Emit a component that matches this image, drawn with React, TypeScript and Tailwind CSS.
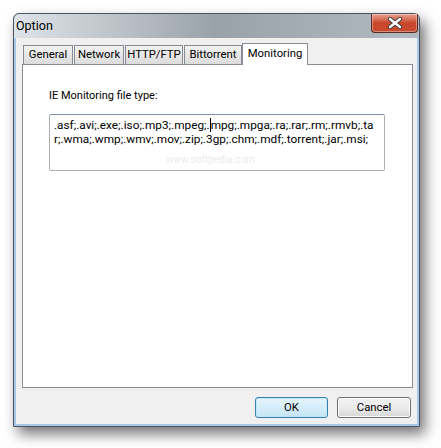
import React from 'react';

const tabs = ['General', 'Network', 'HTTP/FTP', 'Bittorrent'];

const tabWidths: Record<string, string> = {
  General: 'w-[50px]',
  Network: 'w-[50px]',
  'HTTP/FTP': 'w-[58px]',
  Bittorrent: 'w-[58px]',
};

const CloseButton = () => (
  <div className="w-[47px] h-[19px] rounded-b-[4px] border border-t-0 border-[#5a2a22] bg-gradient-to-b from-[#e8a391] via-[#c8462c] to-[#c94a30] flex items-center justify-center shadow-[inset_0_0_0_1px_rgba(255,255,255,0.35)]">
    <svg width="16" height="12" viewBox="0 0 16 12">
      <path d="M3 2 L13 10 M13 2 L3 10" stroke="#3a3a3a" strokeWidth="4.2" strokeLinecap="round" />
      <path d="M3 2 L13 10 M13 2 L3 10" stroke="#ffffff" strokeWidth="2.4" strokeLinecap="round" />
    </svg>
  </div>
);

const App = () => {
  return (
    <div className="w-[441px] h-[448px] bg-white pt-[13px] pl-[13px] font-['Roboto',sans-serif] text-[11.3px] text-black">
      <div className="w-[407px] h-[414px] flex flex-col rounded-t-[6px] border border-[#4b5563] bg-[#b9c0c8] shadow-[5px_7px_14px_rgba(0,0,0,0.55)]">
        {/* title bar */}
        <div className="h-[24px] flex items-start justify-between rounded-t-[6px] bg-gradient-to-r from-[#dfe4e9] via-[#9aa2a9] to-[#b3bac1]">
          <span className="pl-[2px] pt-[5px] leading-[14px] text-[12.5px]">Option</span>
          <div className="pr-[1px]">
            <CloseButton />
          </div>
        </div>
        {/* client area */}
        <div className="flex-1 flex flex-col border-l-2 border-b-2 border-r-2 border-[#a9c8e8] bg-[#f0f0f0]">
          <div className="flex flex-col px-[6px] pt-[5px]">
            <div className="flex items-end h-[21px] pl-[1px]">
              {tabs.map((t) => (
                <div
                  key={t}
                  className={`${tabWidths[t]} h-[19px] mr-[1px] border border-b-0 border-[#898c95] bg-gradient-to-b from-[#f2f2f2] to-[#dcdcdc] flex items-center justify-center leading-none`}
                >
                  {t}
                </div>
              ))}
              <div className="w-[66px] h-[22px] -ml-[1px] -mb-[1px] border border-b-0 border-[#898c95] bg-white flex items-start justify-center pt-[4px] leading-none relative z-10">
                Monitoring
              </div>
            </div>
            <div className="w-[391px] h-[324px] border border-[#898c95] bg-white pl-[26px] pt-[24px]">
              <div className="leading-[14px] text-[11px]">IE Monitoring file type:</div>
              <div className="mt-[11px] w-[336px] h-[57px] border border-[#abadb3] border-t-[#7f93ad] rounded-[2px] pl-[4px] pt-[3px] leading-[14px] text-[11.8px]">
                <div className="whitespace-nowrap">
                  .asf;.avi;.exe;.iso;.mp3;.mpeg;.<span className="border-l border-black" />mpg;.mpga;.ra;.rar;.rm;.rmvb;.ta
                </div>
                <div className="whitespace-nowrap">r;.wma;.wmp;.wmv;.mov;.zip;.3gp;.chm;.mdf;.torrent;.jar;.msi;</div>
                <div className="pl-[112px] pt-[7px] text-[10px] text-[#ececec]">www.softpedia.com</div>
              </div>
            </div>
          </div>
          <div className="flex justify-end gap-[9px] pr-[6px] pt-[9px]">
            <button className="w-[73px] h-[21px] rounded-[3px] border border-[#3c7fb1] bg-gradient-to-b from-[#e5f4fc] to-[#c4e5f6] shadow-[inset_0_0_0_1px_#bfe6fa] leading-none">
              OK
            </button>
            <button className="w-[74px] h-[21px] rounded-[3px] border border-[#707070] bg-gradient-to-b from-[#f2f2f2] via-[#ebebeb] to-[#d6d6d6] shadow-[inset_0_0_0_1px_#fcfcfc] leading-none">
              Cancel
            </button>
          </div>
        </div>
      </div>
    </div>
  );
};

export default App;
